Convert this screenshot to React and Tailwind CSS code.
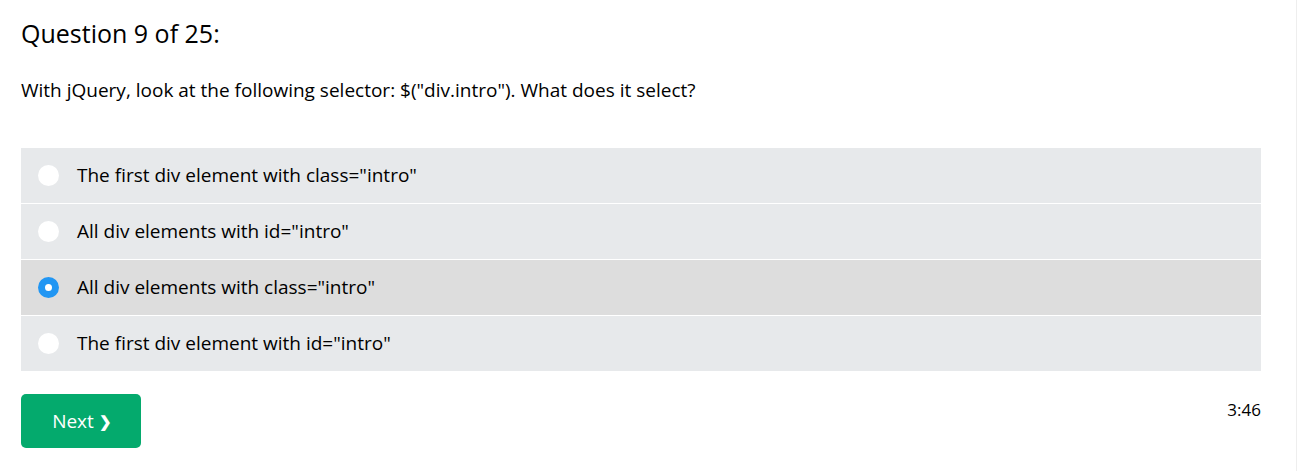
import React, { useState } from "react";

const options = [
  'The first div element with class="intro"',
  'All div elements with id="intro"',
  'All div elements with class="intro"',
  'The first div element with id="intro"',
];

const App = () => {
  const [picked, setPicked] = useState(2);

  return (
    <div className="min-h-screen bg-white font-['Open_Sans',sans-serif] text-black">
      <div className="w-[1297px] min-h-[471px] border-r border-[#eeeeee] pl-[21px] pr-[35px] pt-[15px]">
        <h2 className="text-[25px] leading-[36px]">Question 9 of 25:</h2>

        <p className="mt-[25px] text-[19px] leading-[28px]">
          With jQuery, look at the following selector: $("div.intro"). What does it select?
        </p>

        {/* answer list */}
        <div className="mt-[44px] flex flex-col gap-px">
          {options.map((text, i) => {
            const isPicked = picked === i;
            return (
              <label
                key={i}
                onClick={() => setPicked(i)}
                className={`flex h-[55px] cursor-pointer items-center pl-[17px] ${isPicked ? "bg-[#dddddd]" : "bg-[#e7e9eb]"}`}
              >
                {isPicked ? (
                  <span className="h-[21px] w-[21px] rounded-full border-[7px] border-[#2196f3] bg-white" />
                ) : (
                  <span className="h-[21px] w-[21px] rounded-full bg-white" />
                )}
                <span className="ml-[18px] text-[19px]">{text}</span>
              </label>
            );
          })}
        </div>

        <div className="mt-[23px] flex items-start justify-between">
          <button className="flex h-[54px] w-[120px] items-center justify-center rounded-[5px] bg-[#04aa6d] pl-[2px] text-[19px] text-white">
            Next <span className="ml-[5px] text-[15px] font-bold">❯</span>
          </button>
          <span className="mt-[3px] text-[17px]">3:46</span>
        </div>
      </div>
    </div>
  );
};

export default App;
